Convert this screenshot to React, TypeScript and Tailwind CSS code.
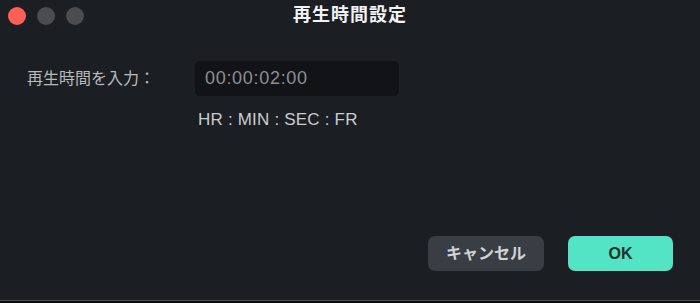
import React from "react";

const font = { fontFamily: '"Liberation Sans", "Noto Sans CJK JP", sans-serif' };

function TrafficLights() {
  return (
    <div className="flex items-center gap-[11px] pl-[8px]">
      <span className="h-[18px] w-[18px] rounded-full bg-[#fe5f57]" />
      <span className="h-[18px] w-[18px] rounded-full bg-[#4a4c4f]" />
      <span className="h-[18px] w-[18px] rounded-full bg-[#4a4c4f]" />
    </div>
  );
}

export default function App() {
  return (
    <div
      className="flex h-[303px] w-[700px] flex-col bg-[#1b1e22] text-white"
      style={font}
    >
      {/* title bar */}
      <div className="grid h-[31px] shrink-0 grid-cols-[1fr_auto_1fr] items-center">
        <TrafficLights />
        <div className="text-[18px] font-bold tracking-[1px] text-[#f2f2f2]">再生時間設定</div>
        <div />
      </div>

      {/* body */}
      <div className="flex flex-1 flex-col px-[27px]">
        <div className="mt-[30px] grid grid-cols-[168px_204px] items-center">
          <label className="text-[16px] text-[#b9babc]">再生時間を入力：</label>
          <div className="flex h-[35px] items-center rounded-[5px] bg-[#111316] px-[10px]">
            <span className="text-[18px] tracking-[0.7px] text-[#8d9093]">00:00:02:00</span>
          </div>
        </div>
        <div className="mt-[11px] grid grid-cols-[171px_auto]">
          <div />
          <span className="text-[17px] tracking-[0.2px] text-[#caccce]">HR : MIN : SEC : FR</span>
        </div>

        <div className="mt-auto mb-[29px] flex justify-end gap-[24px]">
          <button className="flex h-[35px] w-[116px] items-center justify-center rounded-[7px] bg-[#393d44] text-[16px] font-bold text-[#d2d3d5]">
            キャンセル
          </button>
          <button className="flex h-[35px] w-[105px] items-center justify-center rounded-[7px] bg-[#53e3c5] text-[16px] font-bold text-[#25302f]">
            OK
          </button>
        </div>
      </div>

      {/* window bottom edge */}
      <div className="h-[1px] shrink-0 bg-[#4b4e52]" />
      <div className="h-[2px] shrink-0 bg-[#0b0c0d]" />
    </div>
  );
}
